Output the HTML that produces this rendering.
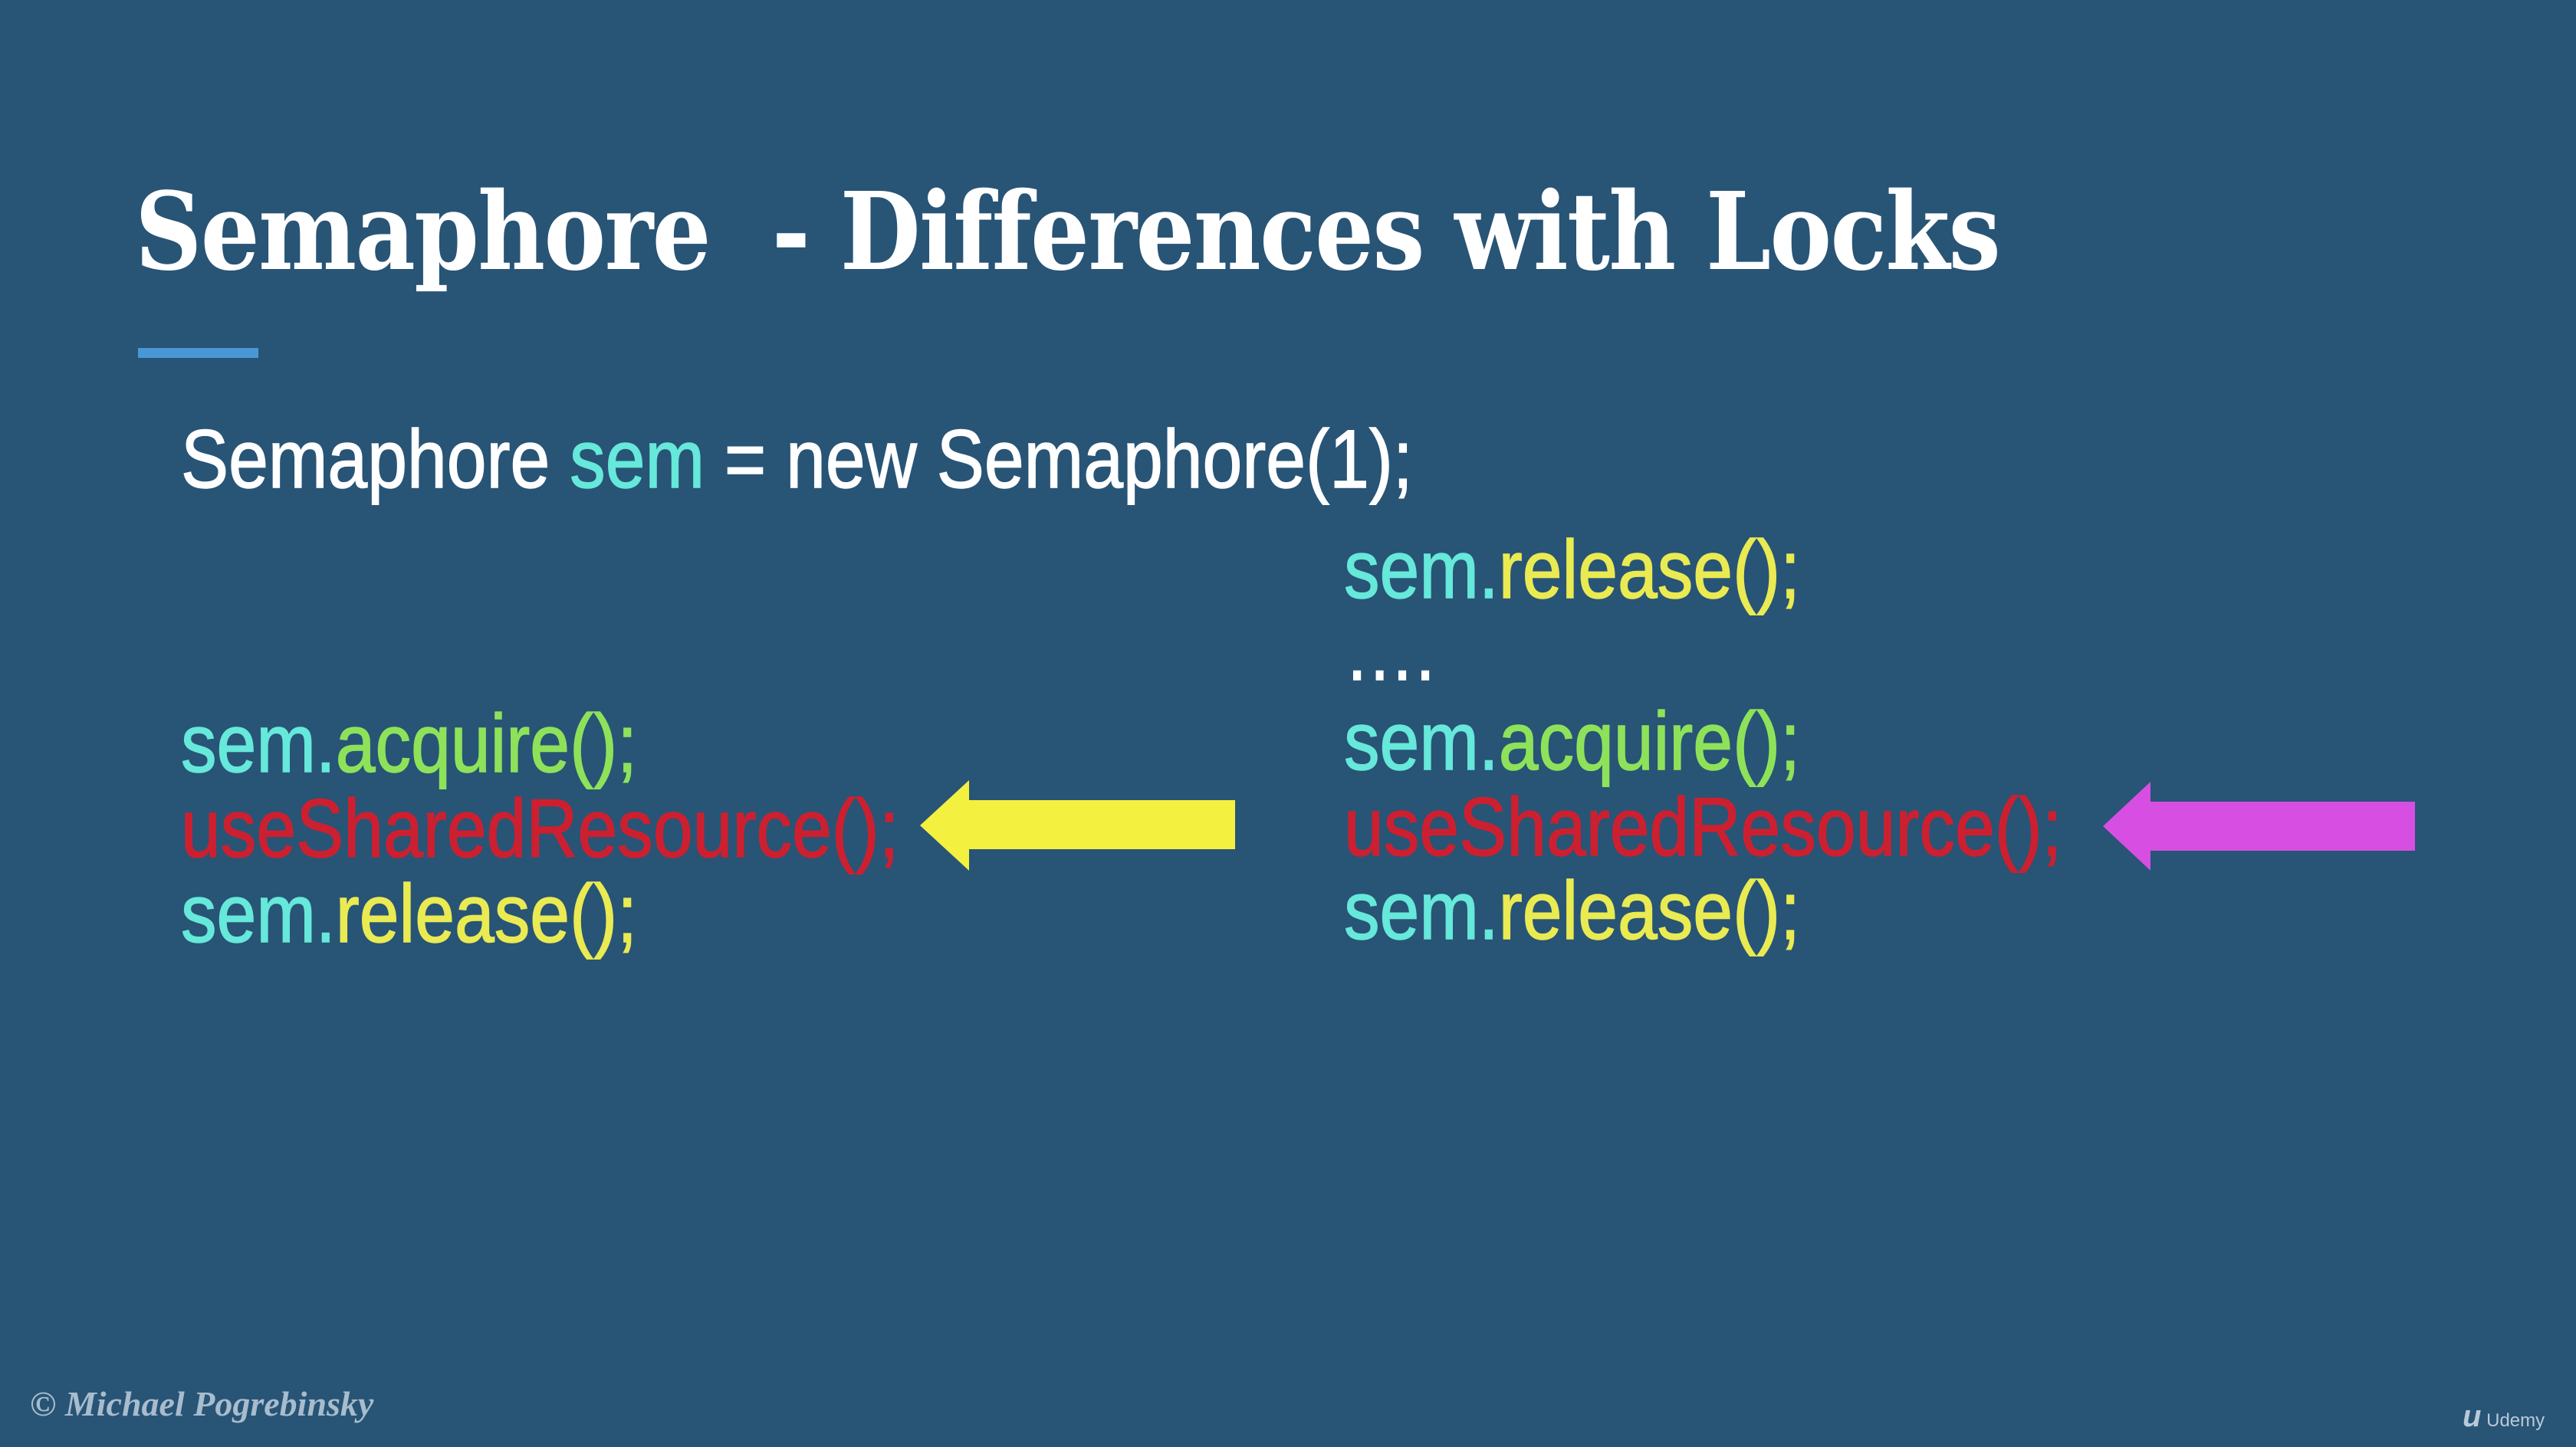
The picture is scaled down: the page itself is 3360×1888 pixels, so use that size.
<!DOCTYPE html>
<html><head><style>
html,body{margin:0;padding:0}
body{width:3360px;height:1888px;background:#285476;position:relative;overflow:hidden;font-family:"Liberation Sans",sans-serif}
.t{position:absolute;white-space:nowrap}
.title{left:176px;top:233px;font-family:"DejaVu Serif","Liberation Serif",serif;font-weight:bold;font-size:140px;color:#fff;line-height:1;transform:scaleX(0.865);transform-origin:left top;letter-spacing:-2px}
.code{font-size:108px;line-height:1;transform:scaleX(0.862);transform-origin:left top;-webkit-text-stroke:1.5px currentColor}
.c{color:#66e8da}.g{color:#8ee25a}.y{color:#eaea52}.r{color:#cc2030}.w{color:#fff}
</style></head><body>
<div class="t title">Semaphore&nbsp; - Differences with Locks</div>
<div style="position:absolute;left:180px;top:454px;width:157px;height:13px;background:#4a97d6"></div>
<div class="t code w" style="left:236px;top:545px">Semaphore <span class="c">sem</span> = new Semaphore(1);</div>

<div class="t code c" style="left:236px;top:916px">sem.<span class="g">acquire();</span></div>
<div class="t code r" style="left:236px;top:1027px">useSharedResource();</div>
<div class="t code c" style="left:236px;top:1138px">sem.<span class="y">release();</span></div>

<div class="t code c" style="left:1753px;top:689px">sem.<span class="y">release();</span></div>
<div class="t code w" style="left:1753px;top:796px">….</div>
<div class="t code c" style="left:1753px;top:913px">sem.<span class="g">acquire();</span></div>
<div class="t code r" style="left:1753px;top:1025px">useSharedResource();</div>
<div class="t code c" style="left:1753px;top:1134px">sem.<span class="y">release();</span></div>

<svg style="position:absolute;left:0;top:0" width="3360" height="1888">
<polygon points="1200,1077 1264,1018 1264,1044 1611,1044 1611,1108 1264,1108 1264,1136" fill="#f4f040"/>
<polygon points="2743,1078 2805,1020 2805,1046 3150,1046 3150,1110 2805,1110 2805,1136" fill="#d64ee2"/>
</svg>

<div class="t" style="left:39px;top:1805px;font-family:'Liberation Serif',serif;font-style:italic;font-weight:bold;font-size:46px;color:#a7bccd">© Michael Pogrebinsky</div>
<div class="t" style="left:3212px;top:1826px;font-size:24px;color:#b8cad8"><span style="font-size:40px;font-weight:bold;font-style:italic">u</span> Udemy</div>
</body></html>
